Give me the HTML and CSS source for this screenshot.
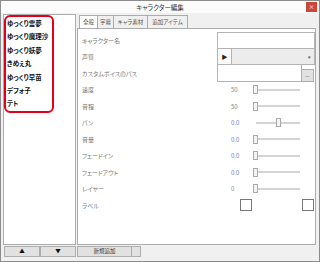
FILE: index.html
```html
<!DOCTYPE html>
<html lang="ja">
<head>
  <meta charset="UTF-8">
  <title>キャラクター編集</title>
  <link rel="stylesheet" href="styles.css">
</head>
<body>
  <div class="window">
    <div class="titlebar">
      <span class="title">キャラクター編集</span>
      <span class="close">×</span>
    </div>

    <div class="main">
      <div class="left">
        <ul class="chars">
          <li>ゆっくり霊夢</li>
          <li>ゆっくり魔理沙</li>
          <li>ゆっくり妖夢</li>
          <li>きめぇ丸</li>
          <li>ゆっくり早苗</li>
          <li>デフォ子</li>
          <li>テト</li>
        </ul>
        <div class="btn-row">
          <button class="btn arrow">▲</button>
          <button class="btn arrow">▼</button>
        </div>
        <div class="mark"></div>
      </div>

      <div class="right">
        <div class="tabs">
          <span class="tab active">全般</span>
          <span class="tab">字幕</span>
          <span class="tab">キャラ素材</span>
          <span class="tab">追加アイテム</span>
        </div>

        <div class="panel">
          <div class="label">キャラクター名</div>
          <div class="field"><div class="input"></div></div>

          <div class="label">声質</div>
          <div class="field voice">
            <span class="play">▶</span>
            <span class="combo"><i>▾</i></span>
          </div>

          <div class="label">カスタムボイスのパス</div>
          <div class="field path">
            <span class="input"></span>
            <span class="browse">...</span>
          </div>

          <div class="label">速度</div>
          <div class="field num"><span class="val">50</span><span class="slider"><b class="thumb"></b></span></div>

          <div class="label">音程</div>
          <div class="field num"><span class="val">50</span><span class="slider"><b class="thumb"></b></span></div>

          <div class="label">パン</div>
          <div class="field num"><span class="val blue">0.0</span><span class="slider pan"><b class="thumb"></b></span></div>

          <div class="label">音量</div>
          <div class="field num"><span class="val blue">0.0</span><span class="slider"><b class="thumb"></b></span></div>

          <div class="label">フェードイン</div>
          <div class="field num"><span class="val blue">0.0</span><span class="slider"><b class="thumb"></b></span></div>

          <div class="label">フェードアウト</div>
          <div class="field num"><span class="val blue">0.0</span><span class="slider"><b class="thumb"></b></span></div>

          <div class="label">レイヤー</div>
          <div class="field num"><span class="val">0</span><span class="slider"><b class="thumb"></b></span></div>

          <div class="label blue">ラベル</div>
          <div class="field checks"><span class="box"></span><span class="box"></span></div>
        </div>

        <div class="btn-row">
          <button class="btn add">新規追加</button>
          <button class="btn small"></button>
        </div>
      </div>
    </div>
  </div>
</body>
</html>
```

FILE: styles.css
```css
* {
  box-sizing: border-box;
}
body {
  margin: 0;
  font-family: "Noto Sans CJK JP", "Noto Sans", sans-serif;
  font-feature-settings: "palt";
  background: #ffffff;
}
.window {
  width: 320px;
  height: 262px;
  border: 1px solid #8c8c8c;
  background: #f0f0f0;
  display: flex;
  flex-direction: column;
}
.titlebar {
  height: 12px;
  background: #fbfbfb;
  display: flex;
  align-items: center;
  justify-content: center;
  position: relative;
}
.title {
  font-size: 6.5px;
  color: #333;
}
.close {
  position: absolute;
  right: 2px;
  top: 1px;
  width: 11px;
  height: 10px;
  background: #c9463d;
  color: #fff;
  font-size: 6px;
  line-height: 10px;
  text-align: center;
}
.main {
  display: flex;
  padding: 1px 0 0 2px;
  gap: 1px;
}
.left {
  width: 73px;
  position: relative;
}
.chars {
  list-style: none;
  margin: 0;
  padding: 2px 0 0 3px;
  height: 231px;
  border: 1px solid #adadad;
  background: #fff;
}
.chars li {
  font-size: 6.5px;
  font-weight: bold;
  color: #111;
  line-height: 13.4px;
}
.mark {
  position: absolute;
  left: 1px;
  top: 1px;
  width: 50px;
  height: 98px;
  border: 2px solid #e3001b;
  border-radius: 6px;
}
.btn-row {
  display: flex;
  margin-top: 1px;
  padding-left: 1px;
}
.btn {
  height: 11px;
  padding: 0;
  border: 1px solid #adadad;
  background: #e1e1e1;
  font-family: inherit;
  font-size: 5.5px;
  color: #333;
  line-height: 9px;
}
.btn.arrow {
  width: 36px;
  color: #111;
}
.btn.add {
  width: 55px;
  margin-left: -1px;
}
.btn.small {
  width: 10px;
  margin-left: -1px;
}
.right {
  width: 239px;
  padding-top: 1px;
}
.tabs {
  display: flex;
  height: 13px;
  padding-left: 2px;
}
.tab {
  font-size: 5.5px;
  color: #555;
  border: 1px solid #acacac;
  border-bottom: none;
  background: #f0f0f0;
  padding: 0;
  text-align: center;
  white-space: nowrap;
  line-height: 12px;
  margin-right: -1px;
}
.tab.active {
  background: #fff;
}
.tab:nth-child(1) { width: 19px; }
.tab:nth-child(2) { width: 17px; }
.tab:nth-child(3) { width: 35px; }
.tab:nth-child(4) { width: 41px; }
.panel {
  height: 217px;
  border: 1px solid #acacac;
  background: #fff;
  padding: 3px 0 0 4px;
  display: grid;
  grid-template-columns: 135px 98px;
  grid-auto-rows: 16.5px;
  align-content: start;
}
.label {
  font-size: 6px;
  color: #777;
  display: flex;
  align-items: center;
}
.blue {
  color: #6a7cc4;
}
.field {
  display: flex;
  align-items: center;
  font-size: 6px;
}
.field .input {
  height: 100%;
  flex: 1;
  border: 1px solid #b4b4b4;
  background: #fff;
}
.voice {
  align-items: stretch;
}
.play {
  width: 15px;
  border: 1px solid #b4b4b4;
  border-top: none;
  background: #fafafa;
  color: #222;
  font-size: 6px;
  display: flex;
  align-items: center;
  justify-content: center;
}
.combo {
  flex: 1;
  border: 1px solid #b4b4b4;
  border-top: none;
  border-left: none;
  background: #ececec;
  display: flex;
  justify-content: flex-end;
  align-items: center;
}
.combo i {
  font-style: normal;
  font-size: 5px;
  color: #555;
  width: 9px;
  text-align: center;
}
.path {
  align-items: stretch;
  padding-right: 1px;
}
.path .input {
  height: auto;
  border-top: none;
}
.browse {
  width: 13px;
  height: 13px;
  align-self: flex-end;
  border: 1px solid #adadad;
  background: #e1e1e1;
  color: #555;
  font-size: 5px;
  text-align: center;
  line-height: 9px;
  margin-left: -1px;
}
.num .val {
  width: 36px;
  padding-left: 14px;
  color: #888;
  font-size: 6px;
}
.num .val.blue {
  color: #6a7cc4;
}
.slider {
  width: 47px;
  height: 9px;
  position: relative;
  display: flex;
  align-items: center;
}
.slider::before {
  content: "";
  flex: 1;
  height: 2px;
  background: #d4d4d4;
}
.slider.pan {
  width: 44px;
  margin-left: 3px;
}
.thumb {
  position: absolute;
  left: 0;
  top: 0;
  width: 5px;
  height: 9px;
  border: 1px solid #a9a9a9;
  background: #f4f4f4;
}
.slider.pan .thumb {
  left: 20px;
}
.checks {
  justify-content: space-between;
  padding: 0 1px 0 23px;
}
.box {
  width: 12px;
  height: 12px;
  border: 1px solid #777;
  background: #fff;
}
```
